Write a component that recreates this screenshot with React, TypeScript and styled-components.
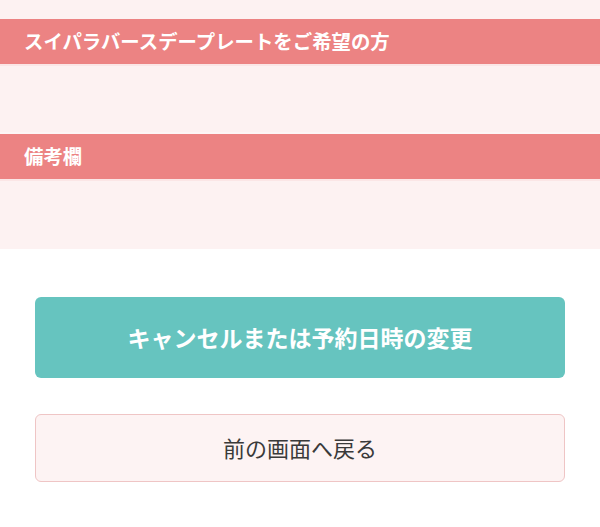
import React from "react";
import styled, { createGlobalStyle } from "styled-components";

const GlobalStyle = createGlobalStyle`
  html, body {
    margin: 0;
    padding: 0;
    background: #ffffff;
    font-family: "Noto Sans CJK JP", "Noto Sans", sans-serif;
  }
  * { box-sizing: border-box; }
`;

const Page = styled.div`
  width: 600px;
  min-height: 527px;
  display: flex;
  flex-direction: column;
  background: #ffffff;
`;

const FormArea = styled.section`
  display: flex;
  flex-direction: column;
  padding-top: 19px;
  background: #fdf2f2;
`;

const SectionHeader = styled.h2`
  margin: 0;
  height: 47px;
  display: flex;
  align-items: center;
  padding: 0 0 1px 24px;
  background: #ec8383;
  border-bottom: 2px solid #fbe6e6;
  color: #ffffff;
  font-size: 19.4px;
  font-weight: 700;
  letter-spacing: 0;
  line-height: 1;
`;

const SectionBody = styled.div<{ $h: number; $divider?: boolean }>`
  height: ${(p) => p.$h}px;
  background: #fdf2f2;
  border-bottom: ${(p) => (p.$divider ? "2px solid #fdf6f6" : "none")};
`;

const Actions = styled.div`
  display: flex;
  flex-direction: column;
  gap: 36px;
  padding: 48px 35px 0;
`;

const PrimaryButton = styled.button`
  height: 81px;
  width: 100%;
  border: none;
  border-radius: 6px;
  background: #66c4bf;
  color: #ffffff;
  font-family: "Noto Sans CJK JP", "Noto Sans", sans-serif;
  font-size: 23px;
  font-weight: 700;
  display: flex;
  align-items: center;
  justify-content: center;
  padding: 0 0 2px;
  cursor: pointer;
`;

const BackButton = styled.button`
  height: 68px;
  width: 100%;
  border: 1.5px solid #efc5c5;
  border-radius: 6px;
  background: #fdf3f3;
  color: #3a3a3a;
  font-family: "Noto Sans CJK JP", "Noto Sans", sans-serif;
  font-size: 22px;
  font-weight: 400;
  display: flex;
  align-items: center;
  justify-content: center;
  padding: 0 0 2px;
  cursor: pointer;
`;

export default function App() {
  return (
    <>
      <GlobalStyle />
      <Page>
        <FormArea>
          <SectionHeader>スイパラバースデープレートをご希望の方</SectionHeader>
          <SectionBody $h={68} $divider />
          <SectionHeader>備考欄</SectionHeader>
          <SectionBody $h={68} />
        </FormArea>
        <Actions>
          <PrimaryButton>キャンセルまたは予約日時の変更</PrimaryButton>
          <BackButton>前の画面へ戻る</BackButton>
        </Actions>
      </Page>
    </>
  );
}
